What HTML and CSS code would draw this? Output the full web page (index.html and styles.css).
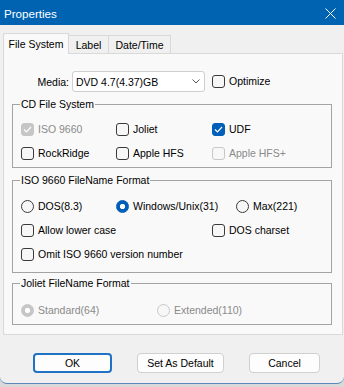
FILE: index.html
```html
<!DOCTYPE html>
<html>
<head>
<meta charset="utf-8">
<title>Properties</title>
<link rel="stylesheet" href="styles.css">
</head>
<body>
<div class="window">
  <div class="titlebar">
    <span class="title">Properties</span>
    <svg class="close" width="11" height="11" viewBox="0 0 11 11"><path d="M0.5 0.5 L10.5 10.5 M10.5 0.5 L0.5 10.5" stroke="#fff" stroke-width="1" fill="none"/></svg>
  </div>
  <div class="tabs">
    <div class="tab active">File System</div>
    <div class="tab t-label">Label</div>
    <div class="tab t-date">Date/Time</div>
  </div>
  <div class="panel">
    <div class="media-row">
      <span class="media-label">Media:</span>
      <div class="combo">
        <span class="combo-text">DVD 4.7(4.37)GB</span>
        <svg class="chev" width="8" height="5" viewBox="0 0 8 5"><path d="M0.5 0.5 L4 4 L7.5 0.5" stroke="#555" stroke-width="1" fill="none"/></svg>
      </div>
      <div class="item"><span class="box"></span><span>Optimize</span></div>
    </div>

    <fieldset class="group cd">
      <legend>CD File System</legend>
      <div class="grid cd-grid">
        <div class="item disabled"><span class="box checked-dis"><svg width="11" height="11" viewBox="0 0 11 11"><path d="M2 5.5 L4.5 8 L9 3" stroke="#fff" stroke-width="1.2" fill="none"/></svg></span><span>ISO 9660</span></div>
        <div class="item"><span class="box"></span><span>Joliet</span></div>
        <div class="item"><span class="box checked"><svg width="11" height="11" viewBox="0 0 11 11"><path d="M2 5.5 L4.5 8 L9 3" stroke="#fff" stroke-width="1.2" fill="none"/></svg></span><span>UDF</span></div>
        <div class="item"><span class="box"></span><span>RockRidge</span></div>
        <div class="item"><span class="box"></span><span>Apple HFS</span></div>
        <div class="item disabled"><span class="box box-dis"></span><span>Apple HFS+</span></div>
      </div>
    </fieldset>

    <fieldset class="group iso">
      <legend>ISO 9660 FileName Format</legend>
      <div class="grid iso-grid">
        <div class="item"><span class="radio"></span><span>DOS(8.3)</span></div>
        <div class="item"><span class="radio on"></span><span>Windows/Unix(31)</span></div>
        <div class="item"><span class="radio"></span><span>Max(221)</span></div>
      </div>
      <div class="grid iso-grid2">
        <div class="item"><span class="box"></span><span>Allow lower case</span></div>
        <div class="item"><span class="box"></span><span>DOS charset</span></div>
      </div>
      <div class="grid single">
        <div class="item"><span class="box"></span><span>Omit ISO 9660 version number</span></div>
      </div>
    </fieldset>

    <fieldset class="group joliet">
      <legend>Joliet FileName Format</legend>
      <div class="grid joliet-grid">
        <div class="item disabled"><span class="radio on-dis"></span><span>Standard(64)</span></div>
        <div class="item disabled"><span class="radio radio-dis"></span><span>Extended(110)</span></div>
      </div>
    </fieldset>
  </div>
  <div class="buttons">
    <div class="btn default b-ok">OK</div>
    <div class="btn b-def">Set As Default</div>
    <div class="btn b-cancel">Cancel</div>
  </div>
</div>
</body>
</html>
```
FILE: styles.css
```css
html, body {
  margin: 0;
  padding: 0;
}
body {
  width: 344px;
  height: 387px;
  overflow: hidden;
  background: #d9d9d9;
  font-family: "Liberation Sans", Arial, sans-serif;
  font-size: 10.5px;
  color: #000;
}
.window {
  height: 384px;
  box-sizing: border-box;
  background: #f0f0f0;
  border-bottom: 1px solid #5b87bb;
  border-radius: 0 0 7px 7px;
  overflow: hidden;
}
.titlebar {
  height: 25px;
  background: #0063b1;
  display: flex;
  align-items: center;
  padding-left: 4px;
}
.title {
  color: #fff;
  font-size: 11.6px;
  padding-top: 1px;
}
.close {
  margin-left: auto;
  margin-right: 8px;
  margin-top: 1px;
}
.tabs {
  display: flex;
  align-items: flex-end;
  height: 20px;
  margin-top: 8px;
  padding-left: 3px;
}
.tab {
  box-sizing: border-box;
  height: 18px;
  border: 1px solid #d9d9d9;
  border-bottom: none;
  background: #f0f0f0;
  display: flex;
  align-items: center;
  justify-content: center;
  margin-left: -1px;
}
.tab.active {
  margin-left: 0;
  width: 66px;
  height: 21px;
  margin-bottom: -1px;
  background: #f9f9f9;
  position: relative;
  z-index: 1;
  padding-bottom: 1px;
}
.t-label { width: 41px; }
.t-date { width: 63px; }
.panel {
  box-sizing: border-box;
  margin-left: 3px;
  width: 340px;
  border: 1px solid #d9d9d9;
  background: #f9f9f9;
  padding: 17px 10px 9px 8px;
}
.media-row {
  display: flex;
  align-items: center;
  height: 21px;
}
.media-label {
  width: 57px;
  text-align: right;
  margin-right: 3px;
}
.combo {
  box-sizing: border-box;
  width: 133px;
  height: 21px;
  background: #fff;
  border: 1px solid #cfcfcf;
  border-radius: 3px;
  display: flex;
  align-items: center;
  padding-left: 3px;
  margin-right: 7px;
}
.chev {
  margin-left: auto;
  margin-right: 4px;
}
.item {
  display: flex;
  align-items: center;
  height: 13px;
  line-height: 13px;
  gap: 4px;
  white-space: nowrap;
}
.box {
  box-sizing: border-box;
  width: 13px;
  height: 13px;
  flex: none;
  border: 1px solid #3a3a3a;
  border-radius: 3px;
  background: #f7f7f7;
  display: flex;
  align-items: center;
  justify-content: center;
}
.box.checked {
  background: #005fb8;
  border-color: #005fb8;
}
.box.checked-dis {
  background: #c6c6c6;
  border-color: #c6c6c6;
}
.box.box-dis {
  border-color: #c8c8c8;
}
.radio {
  box-sizing: border-box;
  width: 13px;
  height: 13px;
  flex: none;
  border: 1px solid #3a3a3a;
  border-radius: 50%;
  background: #f7f7f7;
}
.radio.on {
  border-color: #005fb8;
  background: radial-gradient(circle, #fff 0 2.3px, #005fb8 3px);
}
.radio.on-dis {
  border-color: #c6c6c6;
  background: radial-gradient(circle, #fff 0 2.3px, #c6c6c6 3px);
}
.radio.radio-dis {
  border-color: #c8c8c8;
}
.disabled {
  color: #8a8a8a;
}
.group {
  margin: 0;
  box-sizing: border-box;
  width: 320px;
  border: 1px solid #a3a3a3;
  padding: 12px 8px 7px 8px;
  min-width: 0;
}
.group legend {
  padding: 0 1px;
  margin-left: -1px;
  line-height: 13px;
}
.cd { margin-top: 6px; }
.iso { margin-top: 6px; padding-top: 13px; padding-bottom: 11px; }
.joliet { margin-top: 4px; padding-top: 14px; padding-bottom: 7px; }
.grid {
  display: grid;
  row-gap: 11px;
}
.cd-grid { grid-template-columns: 95px 96px auto; }
.iso-grid { grid-template-columns: 95px 120px auto; }
.iso-grid2 { grid-template-columns: 191px auto; margin-top: 11px; }
.single { margin-top: 11px; }
.joliet-grid { grid-template-columns: 136px auto; }
.buttons {
  display: flex;
  gap: 25px;
  margin-top: 18px;
  padding-left: 33px;
}
.btn {
  box-sizing: border-box;
  height: 20px;
  border: 1px solid #d0d0d0;
  border-radius: 4px;
  background: #fdfdfd;
  display: flex;
  align-items: center;
  justify-content: center;
}
.btn.default {
  border: 2px solid #1f72c4;
}
.b-ok { width: 79px; }
.b-def { width: 87px; }
.b-cancel { width: 71px; }
```
